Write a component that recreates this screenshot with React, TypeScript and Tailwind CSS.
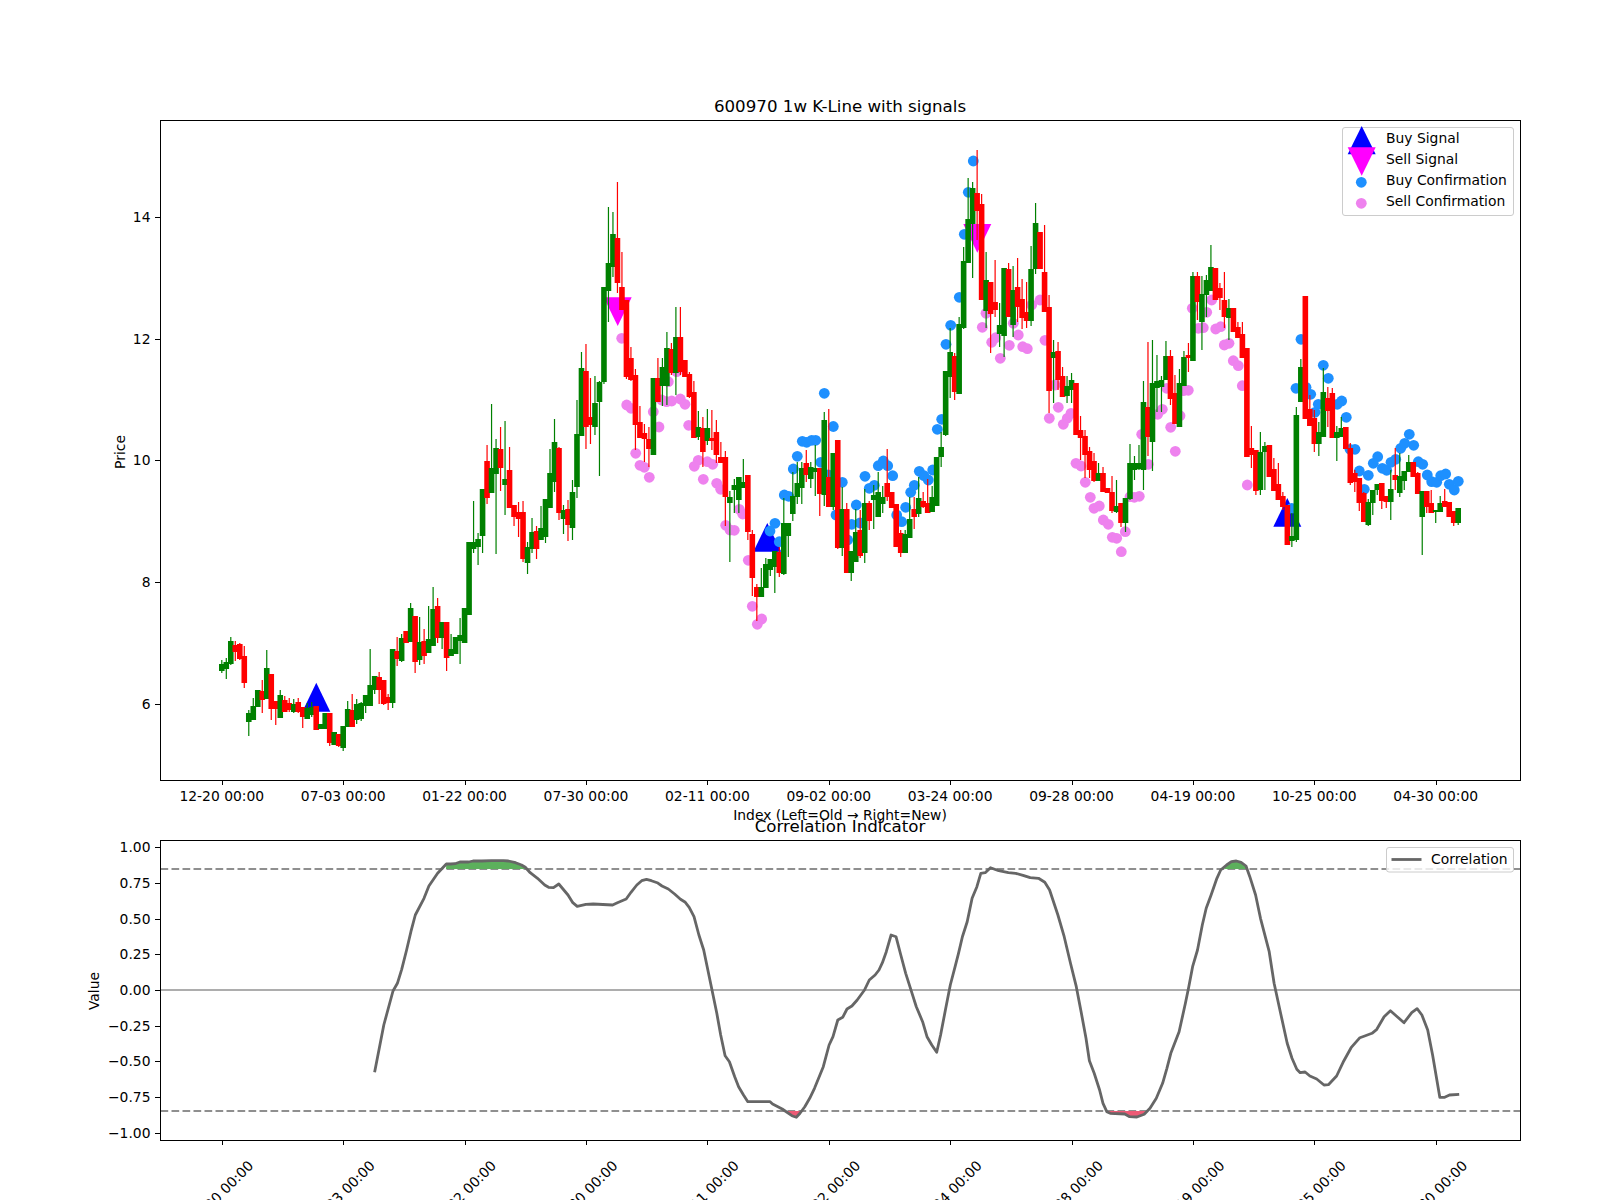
const DATE_LABELS = [
  "12-20 00:00", "07-03 00:00", "01-22 00:00", "07-30 00:00", "02-11 00:00", "09-02 00:00",
  "03-24 00:00", "09-28 00:00", "04-19 00:00", "10-25 00:00", "04-30 00:00",
];

// axes boxes, in page pixels
const LEFT = 160.5;
const RIGHT = 1520.5;
const FIRST_X = 221.8;
const STEP = 4.496;
const candleX = (i: number) => FIRST_X + STEP * i;
const tickX = (k: number) => candleX(27 * k);
// ticks and frames sit on whole pixels
const snap = (v: number) => Math.round(v) + 0.5;

// kind, body top, body bottom, wick top, wick bottom
type Candle = ["g" | "r", number, number, number, number];
const CANDLES: Candle[] = [
  ["g",664,671,660,673],["g",662,669,658,679],["g",641,664,637,665],["r",645,652,641,661],["r",644,659,643,660],
  ["r",656,683,646,688],["g",713,722,710,736],["g",706,720,698,720],["g",690,707,690,707],["r",691,700,680,713],
  ["g",668,699,650,699],["r",674,709,674,720],["r",701,709,701,725],["g",695,718,690,718],["r",700,712,696,712],
  ["r",703,710,698,712],["g",704,712,699,713],["r",702,712,698,713],["r",707,717,707,728],["g",708,719,703,719],
  ["g",707,715,702,717],["r",706,730,706,730],["g",724,729,724,729],["g",713,729,713,729],["r",713,743,713,746],
  ["g",732,745,732,745],["r",734,746,734,747],["g",726,748,726,751],["g",709,727,701,727],["r",710,727,694,727],
  ["g",704,720,699,724],["g",703,719,702,721],["g",695,706,695,713],["g",685,706,649,706],["g",676,690,676,694],
  ["r",677,690,672,704],["r",680,704,680,705],["r",697,703,694,710],["g",649,703,649,708],["r",651,659,637,666],
  ["g",638,661,634,662],["r",631,643,631,643],["g",608,642,603,642],["r",616,662,616,673],["g",642,660,617,665],
  ["r",641,656,629,664],["g",639,653,606,653],["g",609,646,587,646],["r",606,638,598,643],["g",622,638,622,649],
  ["r",622,658,622,671],["g",649,656,634,656],["g",637,654,637,654],["g",635,641,618,664],["g",608,643,608,643],
  ["g",542,615,542,615],["g",542,549,501,553],["g",539,547,533,565],["g",489,536,489,553],["r",461,498,445,504],
  ["g",468,493,404,493],["g",448,474,439,554],["r",449,468,427,491],["g",479,485,421,515],["r",470,508,447,508],
  ["r",505,517,505,526],["r",512,519,502,537],["r",512,559,501,562],["g",547,563,542,574],["g",532,549,518,553],
  ["r",531,549,526,559],["g",528,540,506,540],["g",499,537,499,543],["g",473,508,449,508],["g",442,482,419,492],
  ["r",448,513,447,520],["g",510,519,505,534],["r",509,525,500,541],["g",492,528,480,540],["g",434,487,400,498],
  ["g",368,436,352,436],["r",371,427,344,449],["r",417,425,378,444],["g",403,427,376,435],["g",382,402,381,476],
  ["g",287,382,287,384],["g",263,291,207,322],["g",234,267,212,277],["r",238,283,182,293],["r",287,310,252,310],
  ["r",300,377,300,379],["r",358,380,347,381],["r",375,425,369,450],["r",422,438,406,438],["r",433,439,424,462],
  ["r",439,449,427,467],["g",378,455,378,455],["r",378,402,358,402],["g",367,386,358,406],["g",348,386,332,405],
  ["r",349,373,343,375],["g",337,373,307,395],["r",337,372,307,375],["r",360,377,360,377],["r",374,397,372,398],
  ["r",392,438,381,438],["g",427,437,411,440],["r",428,452,417,467],["g",428,441,409,445],["r",438,441,410,450],
  ["r",432,455,420,463],["r",457,463,442,463],["r",457,497,451,526],["g",497,503,491,562],["g",485,490,479,513],
  ["g",477,500,477,513],["g",482,488,459,488],["r",475,532,475,540],["r",534,578,530,596],["r",587,597,584,621],
  ["g",587,597,568,597],["g",564,588,558,588],["g",559,570,559,576],["g",551,567,551,593],["r",552,573,547,577],
  ["g",523,574,498,575],["g",523,536,523,557],["g",496,514,472,521],["g",483,497,462,504],["g",468,488,462,504],
  ["r",463,475,450,482],["g",467,479,462,488],["g",468,472,445,496],["r",468,494,468,516],["g",420,495,412,506],
  ["r",477,507,409,507],["g",453,507,453,510],["r",440,548,440,549],["g",509,548,487,556],["r",509,573,503,573],
  ["g",551,573,551,581],["g",532,562,509,562],["r",530,556,510,558],["g",503,553,489,563],["r",503,521,501,530],
  ["g",495,500,485,529],["g",492,517,472,517],["g",497,504,486,513],["r",483,497,449,501],["r",492,508,492,508],
  ["r",504,547,504,547],["r",533,553,530,557],["g",534,553,530,553],["g",519,538,497,538],["r",509,517,497,529],
  ["g",498,514,477,517],["r",501,507,492,508],["r",503,513,479,513],["g",497,512,486,512],["g",457,506,457,506],
  ["g",447,457,432,467],["g",371,435,371,436],["g",352,377,328,398],["r",356,392,353,400],["g",324,394,317,394],
  ["g",261,328,247,329],["g",219,263,178,263],["g",188,224,182,278],["r",193,211,150,240],["r",204,300,194,300],
  ["g",280,311,252,328],["r",282,314,282,353],["r",302,310,260,317],["g",325,334,303,347],["g",268,336,268,357],
  ["r",269,317,263,317],["g",290,325,266,337],["r",287,307,258,322],["r",299,318,279,329],["r",312,321,282,328],
  ["g",269,321,246,326],["g",223,269,203,274],["r",232,269,232,269],["r",272,312,225,312],["r",307,391,295,413],
  ["g",352,358,340,403],["r",351,380,342,390],["r",376,397,367,397],["g",386,396,376,403],["g",380,390,373,403],
  ["r",383,435,383,435],["r",430,438,416,460],["r",436,455,430,478],["r",451,470,447,478],["r",461,481,453,482],
  ["g",473,481,463,481],["r",473,492,467,492],["r",488,493,488,493],["r",492,511,476,513],["g",506,512,480,513],
  ["r",503,523,503,527],["g",498,523,498,532],["g",463,499,444,500],["g",463,470,456,480],["g",463,469,445,470],
  ["g",402,470,381,490],["r",407,437,342,456],["g",383,442,340,471],["g",381,388,355,412],["g",380,387,376,412],
  ["g",356,380,341,380],["r",356,399,350,405],["r",393,424,375,424],["g",383,427,369,427],["g",357,386,351,386],
  ["r",355,358,343,372],["g",276,361,272,361],["r",276,302,272,320],["g",294,322,276,350],["g",280,295,275,317],
  ["g",267,291,245,291],["r",268,300,268,300],["r",288,298,283,310],["r",300,317,272,328],["g",308,318,299,340],
  ["r",308,332,308,332],["r",327,338,322,338],["r",334,358,322,358],["r",348,457,348,457],["r",448,455,426,468],
  ["r",450,491,450,495],["g",452,490,432,495],["g",446,452,442,490],["r",445,477,445,477],["r",469,491,458,491],
  ["r",484,500,463,500],["r",496,507,492,510],["r",505,545,505,545],["g",536,541,513,547],["g",415,540,407,542],
  ["g",367,402,359,402],["r",296,419,296,419],["r",409,426,395,426],["r",418,444,410,452],["g",432,444,422,456],
  ["g",392,437,368,437],["r",398,411,387,427],["r",393,438,388,438],["g",432,438,426,461],["g",428,437,417,437],
  ["r",427,449,427,449],["r",448,483,443,485],["r",473,482,470,492],["r",478,503,478,511],["r",493,522,492,522],
  ["g",502,525,499,526],["g",490,503,490,515],["g",484,490,484,495],["r",483,501,483,509],["r",496,502,496,508],
  ["g",489,502,470,520],["r",475,480,448,490],["g",476,493,453,497],["g",471,481,471,490],["g",462,472,455,472],
  ["r",462,477,462,477],["r",473,494,472,494],["g",491,517,491,555],["r",491,507,491,513],["r",503,513,490,513],
  ["g",510,512,510,523],["g",503,512,496,512],["r",501,507,489,507],["r",502,517,502,517],["r",511,523,511,526],
  ["g",508,523,508,525],
];

const BUY_DOTS = [
  [824.3,393.3],[833.3,426.5],[802.3,441.3],[806.7,442.3],[811.7,440.3],[815.7,440.3],[797.3,456.3],[793.3,469],
  [820.7,462.3],[828.3,475],[842.3,482.3],[784.3,495],[788.7,496.3],[865,476.3],[878.3,465.7],[883.3,461],
  [887.7,465.7],[892.7,475.7],[874.3,485.3],[869.3,488.3],[856.3,505],[851.7,524.3],[860,523],[847.7,540],
  [836,515],[896.7,515],[901.7,521.7],[905.7,507.3],[910.7,492.3],[914.3,485.3],[919.3,471.3],[924,475.7],
  [928.3,480],[932.7,470],[937.3,429.3],[941.7,419.3],[775,523.3],[770,531],[779.3,541.7],[973.3,161],
  [968.3,192.3],[964.3,234.3],[959.3,297.3],[950.7,325.3],[946,344.3],[1301,339.3],[1323.3,365.3],[1328.3,378.3],
  [1296,388.3],[1306,387.3],[1310.7,394.3],[1318.3,404.3],[1315,412.3],[1337.3,404.3],[1341.7,401],[1346.3,417.3],
  [1350,449.3],[1355,449.3],[1359.3,471],[1368.3,475.3],[1364.3,489.3],[1377.7,456.7],[1373.3,463.3],[1382.3,468.3],
  [1386.7,470.3],[1391,462.3],[1395.7,459.3],[1400.7,448.3],[1404.7,443.3],[1409.3,434.3],[1413.7,445.3],[1418.3,461.7],
  [1422.7,464.3],[1427.3,475],[1431.7,481.7],[1436.7,482.3],[1440.7,475.7],[1445.7,474],[1449.3,484.3],[1454.3,490],
  [1458.3,481.3],[1291.7,508.3],
];

const SELL_DOTS = [
  [621.7,338.3],[626.7,405],[631,408.3],[653.3,411.7],[659,427],[635.7,453.3],[640,465.3],[644.3,467.3],[649.3,477.3],
  [661.7,400],[666.7,401.7],[671.7,401],[680.3,399],[685,404.3],[668.3,381.7],[676.7,371.7],[688.7,425.3],[698.3,460.3],
  [694.3,466.3],[707.3,461.7],[712.7,464.3],[703.3,479.3],[716.7,483.3],[720.7,489.3],[725.7,525.3],[730,530],
  [734.3,530.3],[739.3,509.3],[742.7,514],[748.3,560.3],[752.3,606.3],[761.7,619],[757.3,624.3],[986,313.3],[982.3,327.3],
  [991.7,342.3],[995.7,337.7],[1000.3,358.3],[1009.3,345.3],[1013.3,323.3],[1018.3,335],[1022.7,346.7],[1027.3,348.7],
  [1045,340.3],[1040,300],[1031.7,305],[1055,385],[1058.3,407.3],[1049.3,418.3],[1067.3,418.3],[1071,413.3],[1063.3,424.3],
  [1076,463.3],[1081,466],[1085.3,482.3],[1090.3,497.3],[1094,508.3],[1099.3,506],[1103.3,520],[1108.3,524.3],
  [1112.3,537.3],[1116.7,538.3],[1125.3,531.7],[1121.3,551.7],[1130,496.7],[1134.3,497.3],[1139.3,496.3],[1141.7,434.3],
  [1148.3,464.3],[1157.7,414.3],[1162.3,409.3],[1166.7,388.3],[1170.7,427.3],[1180,415.7],[1175.3,451.3],[1183.3,390.7],
  [1188.3,390.3],[1247.3,485],[1242.3,385.7],[1233.3,360.7],[1238.3,365.7],[1224.3,345],[1229,343.3],[1215.7,329],
  [1220.7,326.7],[1198.3,328.3],[1203.3,327.7],[1192.3,308.3],[1206.7,312.3],[1211.7,300],
];

const PRICE_TICKS = [
  { label: "6", y: 704 }, { label: "8", y: 582 }, { label: "10", y: 460 }, { label: "12", y: 339 }, { label: "14", y: 217 },
];

const VALUE_TICKS = ["1.00", "0.75", "0.50", "0.25", "0.00", "−0.25", "−0.50", "−0.75", "−1.00"];
const valueY = (v: number) => 990 - v * 142.67;

// correlation line samples, first half then second half, taken off the plot
const CORR_LEFT = [
  [649,847],[668,705],[687,603],[696,580],[705,538],[715,480],[724,425],[733,375],[751,325],[761,288],[779,250],[797,222],
  [806,222],[815,221],[825,216],[843,216],[852,213],[870,213],[890,212],[915,212],[925,213],[940,218],[952,225],[960,232],
  [970,248],[985,265],[1000,285],[1008,292],[1018,293],[1029,282],[1048,315],[1058,338],[1067,349],[1085,343],[1100,342],
  [1140,345],[1150,338],[1168,327],[1178,307],[1190,285],[1200,272],[1210,268],[1220,272],[1232,278],[1242,288],[1255,297],
  [1268,312],[1280,328],[1290,337],[1298,352],[1308,380],[1318,435],[1328,480],[1345,600],[1355,670],[1363,735],[1372,797],
  [1381,815],[1392,860],[1400,890],[1410,915],[1419,935],[1465,935],[1470,942],[1490,957],[1510,977],[1519,982],
];
const CORR_RIGHT = [
  [0,970],[10,950],[20,925],[30,895],[48,830],[60,765],[68,740],[78,690],[88,682],[97,657],[107,648],[118,630],[133,600],
  [143,570],[155,555],[163,540],[170,518],[178,485],[188,435],[198,440],[208,495],[218,550],[230,605],[240,650],[253,695],
  [262,740],[272,765],[282,787],[290,735],[300,660],[310,585],[320,530],[327,490],[335,440],[345,395],[355,325],[365,290],
  [373,250],[382,248],[393,233],[410,242],[430,248],[445,250],[460,256],[475,263],[492,265],[505,277],[515,300],[532,375],
  [545,440],[558,520],[570,590],[580,665],[590,745],[597,812],[607,850],[618,900],[625,940],[633,965],[640,970],[670,972],
  [680,980],[695,981],[710,973],[722,955],[735,925],[748,880],[757,835],[765,790],[782,725],[795,640],[802,590],[810,530],
  [820,480],[830,405],[838,355],[848,315],[860,265],[868,240],[880,225],[890,215],[900,213],[910,217],[920,228],[928,260],
  [940,315],[950,385],[968,485],[978,580],[990,660],[1005,760],[1015,805],[1025,838],[1032,848],[1042,846],[1052,858],
  [1066,867],[1081,885],[1090,884],[1107,858],[1122,812],[1137,773],[1155,743],[1165,738],[1180,730],[1190,718],[1205,680],
  [1218,662],[1232,680],[1246,698],[1262,668],[1273,656],[1283,675],[1295,720],[1305,795],[1320,922],[1330,922],[1340,915],
  [1360,913],
];
const CORR_POINTS = [
  ...CORR_LEFT.map(([x, y]) => [60 + x / 2.063, 790 + y / 3]),
  ...CORR_RIGHT.map(([x, y]) => [800 + x / 2.063, 790 + y / 3]),
];
const toPoints = (pts: number[][]) => pts.map(([x, y]) => `${x.toFixed(1)},${y.toFixed(1)}`).join(" ");

// closes the part of the line between two x values against a threshold level
const bandPoints = (x0: number, x1: number, level: number) =>
  toPoints([[x0, level], ...CORR_POINTS.filter(([x]) => x >= x0 && x <= x1), [x1, level]]);

const triangle = (cx: number, base: number, tip: number) => `${cx - 14},${base} ${cx + 14},${base} ${cx},${tip}`;

const PriceChart = () => (
  <svg className="block h-[830px] w-[1600px] overflow-visible" viewBox="0 0 1600 830">
    <text x="840" y="112" textAnchor="middle" className="text-[16.67px]">600970 1w K-Line with signals</text>

    <polygon points={triangle(617.7, 297.3, 326)} fill="#ff00ff" />
    <polygon points={triangle(977.3, 224, 252.7)} fill="#ff00ff" />
    <polygon points={triangle(316.3, 711.7, 682.7)} fill="#0000ff" />
    <polygon points={triangle(767.3, 551.7, 523)} fill="#0000ff" />
    <polygon points={triangle(1287.3, 526.7, 498)} fill="#0000ff" />

    {BUY_DOTS.map(([x, y], i) => <circle key={i} cx={x} cy={y} r="5.4" fill="#1e90ff" />)}
    {SELL_DOTS.map(([x, y], i) => <circle key={i} cx={x} cy={y} r="5.4" fill="#ee82ee" />)}

    {CANDLES.map(([kind, top, bottom, wickTop, wickBottom], i) => {
      const color = kind === "g" ? "#008000" : "#ff0000";
      const x = candleX(i);
      return (
        <g key={i} fill={color}>
          <rect x={x - 0.6} y={wickTop} width="1.2" height={wickBottom - wickTop} />
          <rect x={x - 2.8} y={top} width="5.6" height={bottom - top} />
        </g>
      );
    })}

    <rect x={LEFT} y="120.5" width={RIGHT - LEFT} height="660" fill="none" stroke="#000" />

    {PRICE_TICKS.map((t) => (
      <g key={t.label}>
        <line x1="155" x2={LEFT} y1={snap(t.y)} y2={snap(t.y)} stroke="#000" />
        <text x="150.5" y={t.y + 5} textAnchor="end" className="text-[13.89px]">{t.label}</text>
      </g>
    ))}
    {DATE_LABELS.map((label, k) => (
      <g key={label}>
        <line x1={snap(tickX(k))} x2={snap(tickX(k))} y1="780" y2="785" stroke="#000" />
        <text x={tickX(k)} y="801" textAnchor="middle" className="text-[13.89px]">{label}</text>
      </g>
    ))}
    <text x="840" y="820" textAnchor="middle" className="text-[13.89px]">Index (Left=Old → Right=New)</text>
    <text transform="translate(125 452) rotate(-90)" textAnchor="middle" className="text-[13.89px]">Price</text>

    <rect x="1342.5" y="127.5" width="171" height="88" rx="2.5" fill="#fff" fillOpacity="0.8" stroke="#ccc" />
    <polygon points={triangle(1361.7, 154.3, 126)} fill="#0000ff" />
    <polygon points={triangle(1361.7, 147.3, 175.7)} fill="#ff00ff" />
    <circle cx="1361.3" cy="182.3" r="5.4" fill="#1e90ff" />
    <circle cx="1361.3" cy="203.3" r="5.4" fill="#ee82ee" />
    {[["Buy Signal", 142.5], ["Sell Signal", 163.5], ["Buy Confirmation", 184.5], ["Sell Confirmation", 206]].map(([label, y]) => (
      <text key={label} x="1386" y={y} className="text-[13.89px]">{label}</text>
    ))}
  </svg>
);

const CorrelationChart = () => (
  <svg className="block h-[370px] w-[1600px] overflow-visible" viewBox="0 830 1600 370">
    <text x="840" y="832" textAnchor="middle" className="text-[16.67px]">Correlation Indicator</text>

    <line x1={LEFT} x2={RIGHT} y1="990" y2="990" stroke="#adadad" strokeWidth="2" />
    <line x1={LEFT} x2={RIGHT} y1="869" y2="869" stroke="#8f8f8f" strokeWidth="2" strokeDasharray="7.7 3.3" />
    <line x1={LEFT} x2={RIGHT} y1="1111" y2="1111" stroke="#8f8f8f" strokeWidth="2" strokeDasharray="7.7 3.3" />

    <polygon points={bandPoints(446, 526, 869)} fill="#5cb05c" />
    <polygon points={bandPoints(1224, 1247, 869)} fill="#5cb05c" />
    <polygon points={bandPoints(786, 803, 1111)} fill="#ed5a75" />
    <polygon points={bandPoints(1106, 1147, 1111)} fill="#ed5a75" />

    <polyline points={toPoints(CORR_POINTS)} fill="none" stroke="#666" strokeWidth="2.8" strokeLinejoin="round" />

    <rect x={LEFT} y="840.5" width={RIGHT - LEFT} height="300" fill="none" stroke="#000" />

    {VALUE_TICKS.map((label, i) => {
      const y = valueY(1 - i * 0.25);
      return (
        <g key={label}>
          <line x1="155" x2={LEFT} y1={snap(y)} y2={snap(y)} stroke="#000" />
          <text x="150.5" y={y + 5} textAnchor="end" className="text-[13.89px]">{label}</text>
        </g>
      );
    })}
    {DATE_LABELS.map((label, k) => (
      <g key={label}>
        <line x1={snap(tickX(k))} x2={snap(tickX(k))} y1="1140" y2="1145" stroke="#000" />
        <text
          transform={`translate(${tickX(k) - 1} 1193) rotate(-45)`}
          y="5"
          textAnchor="middle"
          className="text-[13.89px]"
        >
          {label}
        </text>
      </g>
    ))}
    <text transform="translate(99 991) rotate(-90)" textAnchor="middle" className="text-[13.89px]">Value</text>

    <rect x="1386.5" y="847.5" width="127" height="24.5" rx="2.5" fill="#fff" fillOpacity="0.8" stroke="#ccc" />
    <line x1="1391.5" x2="1421.5" y1="859.5" y2="859.5" stroke="#666" strokeWidth="2.8" />
    <text x="1431" y="863.5" className="text-[13.89px]">Correlation</text>
  </svg>
);

export default function App() {
  return (
    <div className="h-[1200px] w-[1600px] overflow-hidden bg-white font-['DejaVu_Sans',sans-serif] text-black">
      <PriceChart />
      <CorrelationChart />
    </div>
  );
}
